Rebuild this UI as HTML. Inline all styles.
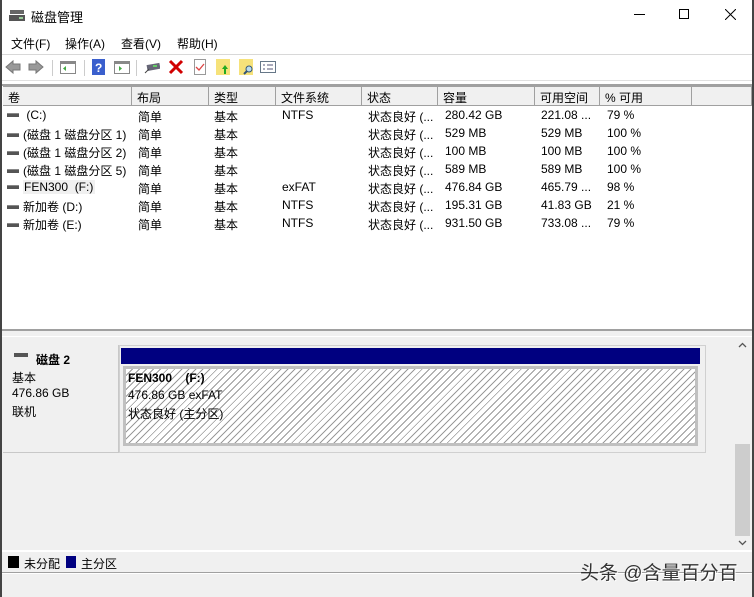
<!DOCTYPE html>
<html><head><meta charset="utf-8"><style>
*{margin:0;padding:0;box-sizing:border-box}
body{width:754px;height:597px;overflow:hidden;background:#fff;font-family:"Liberation Sans","Noto Sans CJK SC",sans-serif;font-size:12px;color:#000;position:relative}
.a{position:absolute;white-space:nowrap}
.hd{position:absolute;top:86px;height:20px;background:#f0f0f0;border-right:1px solid #a0a0a0;border-top:1px solid #a0a0a0;border-bottom:1px solid #a0a0a0;padding:2px 0 0 5px}
.r{position:absolute;left:0;width:700px;height:18px}
.r span{position:absolute;top:1px;white-space:nowrap}
.di{display:inline-block;width:12px;height:4px;background:#555;border-top:1px solid #888;vertical-align:middle;margin:0 4px 2px 0}
.tb{position:absolute;top:59px;width:16px;height:16px}
</style></head><body>
<div class="a" style="left:0;top:0;width:2px;height:597px;background:#444"></div>
<div class="a" style="left:752px;top:0;width:2px;height:597px;background:#444"></div>
<svg class="a" style="left:9px;top:8px" width="16" height="14"><rect x="1" y="2" width="14" height="4" fill="#666"/><rect x="0" y="7" width="16" height="6" fill="#555"/><rect x="10" y="9" width="4" height="2" fill="#9c9"/></svg>
<div class="a" style="left:31px;top:7px;font-size:13px">磁盘管理</div>
<div class="a" style="left:634px;top:14px;width:11px;height:1px;background:#000"></div>
<div class="a" style="left:679px;top:9px;width:10px;height:10px;border:1px solid #000"></div>
<svg class="a" style="left:725px;top:9px" width="11" height="11"><path d="M0 0L11 11M11 0L0 11" stroke="#000" stroke-width="1"/></svg>
<div class="a" style="left:11px;top:35px">文件(F)</div>
<div class="a" style="left:65px;top:35px">操作(A)</div>
<div class="a" style="left:121px;top:35px">查看(V)</div>
<div class="a" style="left:177px;top:35px">帮助(H)</div>
<div class="a" style="left:2px;top:54px;width:750px;height:1px;background:#d8d8d8"></div>
<svg class="tb" style="left:5px"><path d="M1 8L8 2V5H15V11H8V14Z" fill="#999" stroke="#777"/></svg>
<svg class="tb" style="left:28px"><path d="M15 8L8 2V5H1V11H8V14Z" fill="#999" stroke="#777"/></svg>
<div class="a" style="left:52px;top:60px;width:1px;height:16px;background:#ccc"></div>
<svg class="tb" style="left:60px"><rect x="0.5" y="2.5" width="15" height="12" fill="#fff" stroke="#888"/><rect x="1" y="3" width="14" height="2" fill="#888"/><path d="M6 7L3 9.5L6 12Z" fill="#4a4"/></svg>
<div class="a" style="left:84px;top:60px;width:1px;height:16px;background:#ccc"></div>
<svg class="tb" style="left:91px"><rect x="1" y="0" width="13" height="16" fill="#3a5fcd"/><text x="4" y="13" fill="#fff" font-size="12" font-family="Liberation Sans" font-weight="bold">?</text></svg>
<svg class="tb" style="left:114px"><rect x="0.5" y="2.5" width="15" height="12" fill="#fff" stroke="#888"/><rect x="1" y="3" width="14" height="2" fill="#888"/><path d="M5 7L8 9.5L5 12Z" fill="#4a4"/></svg>
<div class="a" style="left:136px;top:60px;width:1px;height:16px;background:#ccc"></div>
<svg class="tb" style="left:144px"><rect x="3" y="5" width="13" height="6" fill="#667" transform="rotate(-10 9 8)"/><rect x="9" y="6" width="4" height="2" fill="#6c6"/><path d="M1 14L5 10" stroke="#444"/></svg>
<svg class="tb" style="left:168px"><path d="M2 2L14 14M14 2L2 14" stroke="#d10000" stroke-width="3"/></svg>
<svg class="tb" style="left:192px"><rect x="2.5" y="0.5" width="11" height="15" fill="#fff" stroke="#999"/><path d="M4 8L7 11L12 5" stroke="#d44" fill="none" stroke-width="1.3"/></svg>
<svg class="tb" style="left:215px"><rect x="1" y="0" width="14" height="16" fill="#f6e27a"/><path d="M10 6L13 10H11V15H9V10H7Z" fill="#2a2"/></svg>
<svg class="tb" style="left:238px"><rect x="1" y="0" width="14" height="16" fill="#f6e27a"/><circle cx="11" cy="10" r="3" fill="#bde" stroke="#357"/><path d="M9 12L6 15" stroke="#357" stroke-width="2"/></svg>
<svg class="tb" style="left:260px"><rect x="0.5" y="2.5" width="15" height="11" fill="#fff" stroke="#678"/><path d="M3 6H5M7 6H13M3 10H5M7 10H13" stroke="#557"/></svg>
<div class="a" style="left:2px;top:80px;width:750px;height:1px;background:#e0e0e0"></div>
<div class="a" style="left:2px;top:84px;width:750px;height:2px;background:#a0a0a0"></div>
<div class="hd" style="left:3px;width:129px">卷</div>
<div class="hd" style="left:132px;width:77px">布局</div>
<div class="hd" style="left:209px;width:67px">类型</div>
<div class="hd" style="left:276px;width:86px">文件系统</div>
<div class="hd" style="left:362px;width:76px">状态</div>
<div class="hd" style="left:438px;width:97px">容量</div>
<div class="hd" style="left:535px;width:65px">可用空间</div>
<div class="hd" style="left:600px;width:92px">% 可用</div>
<div class="hd" style="left:692px;width:60px;padding:0"></div>
<div class="r" style="top:107px"><span style="left:7px"><i class="di"></i> (C:)</span><span style="left:138px">简单</span><span style="left:214px">基本</span><span style="left:282px">NTFS</span><span style="left:368px">状态良好 (...</span><span style="left:445px">280.42 GB</span><span style="left:541px">221.08 ...</span><span style="left:607px">79 %</span></div>
<div class="r" style="top:125px"><span style="left:7px"><i class="di"></i>(磁盘 1 磁盘分区 1)</span><span style="left:138px">简单</span><span style="left:214px">基本</span><span style="left:368px">状态良好 (...</span><span style="left:445px">529 MB</span><span style="left:541px">529 MB</span><span style="left:607px">100 %</span></div>
<div class="r" style="top:143px"><span style="left:7px"><i class="di"></i>(磁盘 1 磁盘分区 2)</span><span style="left:138px">简单</span><span style="left:214px">基本</span><span style="left:368px">状态良好 (...</span><span style="left:445px">100 MB</span><span style="left:541px">100 MB</span><span style="left:607px">100 %</span></div>
<div class="r" style="top:161px"><span style="left:7px"><i class="di"></i>(磁盘 1 磁盘分区 5)</span><span style="left:138px">简单</span><span style="left:214px">基本</span><span style="left:368px">状态良好 (...</span><span style="left:445px">589 MB</span><span style="left:541px">589 MB</span><span style="left:607px">100 %</span></div>
<div class="r" style="top:179px"><span style="left:7px"><i class="di"></i><b style="font-weight:normal;background:#f0f0f0;padding:0 2px 0 1px">FEN300&nbsp; (F:)</b></span><span style="left:138px">简单</span><span style="left:214px">基本</span><span style="left:282px">exFAT</span><span style="left:368px">状态良好 (...</span><span style="left:445px">476.84 GB</span><span style="left:541px">465.79 ...</span><span style="left:607px">98 %</span></div>
<div class="r" style="top:197px"><span style="left:7px"><i class="di"></i>新加卷 (D:)</span><span style="left:138px">简单</span><span style="left:214px">基本</span><span style="left:282px">NTFS</span><span style="left:368px">状态良好 (...</span><span style="left:445px">195.31 GB</span><span style="left:541px">41.83 GB</span><span style="left:607px">21 %</span></div>
<div class="r" style="top:215px"><span style="left:7px"><i class="di"></i>新加卷 (E:)</span><span style="left:138px">简单</span><span style="left:214px">基本</span><span style="left:282px">NTFS</span><span style="left:368px">状态良好 (...</span><span style="left:445px">931.50 GB</span><span style="left:541px">733.08 ...</span><span style="left:607px">79 %</span></div>
<div class="a" style="left:2px;top:329px;width:750px;height:8px;background:#f0f0f0;border-top:2px solid #a0a0a0;border-bottom:1px solid #fff"></div>
<div class="a" style="left:2px;top:337px;width:750px;height:213px;background:#f0f0f0"></div>
<div class="a" style="left:3px;top:345px;width:116px;height:108px;background:#f0f0f0;border-right:1px solid #c8c8c8;border-bottom:1px solid #c8c8c8"></div>
<div class="a" style="left:14px;top:353px;width:14px;height:4px;background:#555"></div>
<div class="a" style="left:36px;top:351px;font-weight:bold">磁盘 2</div>
<div class="a" style="left:12px;top:369px">基本</div>
<div class="a" style="left:12px;top:386px">476.86 GB</div>
<div class="a" style="left:12px;top:403px">联机</div>
<div class="a" style="left:119px;top:345px;width:587px;height:108px;border:1px solid #d0d0d0;background:#f0f0f0"></div>
<div class="a" style="left:121px;top:348px;width:579px;height:16px;background:#000080"></div>
<div class="a" style="left:123px;top:366px;width:575px;height:80px;border:3px solid #c0c0c0;background:repeating-linear-gradient(135deg,#fff 0,#fff 4px,#9a9a9a 4px,#9a9a9a 5px)"></div>
<div class="a" style="left:128px;top:371px;font-weight:bold">FEN300&nbsp;&nbsp;&nbsp; (F:)</div>
<div class="a" style="left:128px;top:388px">476.86 GB exFAT</div>
<div class="a" style="left:128px;top:405px">状态良好 (主分区)</div>
<div class="a" style="left:734px;top:338px;width:17px;height:212px;background:#f0f0f0"></div>
<svg class="a" style="left:738px;top:342px" width="9" height="6"><path d="M1 5L4.5 1.5L8 5" stroke="#555" fill="none" stroke-width="1.3"/></svg>
<div class="a" style="left:735px;top:444px;width:15px;height:92px;background:#cdcdcd"></div>
<svg class="a" style="left:738px;top:540px" width="9" height="6"><path d="M1 1L4.5 4.5L8 1" stroke="#555" fill="none" stroke-width="1.3"/></svg>
<div class="a" style="left:2px;top:551px;width:750px;height:22px;background:#f0f0f0;border-top:1px solid #fff;border-bottom:1px solid #a0a0a0"></div>
<div class="a" style="left:8px;top:556px;width:11px;height:12px;background:#000"></div>
<div class="a" style="left:24px;top:555px">未分配</div>
<div class="a" style="left:66px;top:556px;width:10px;height:12px;background:#000080"></div>
<div class="a" style="left:81px;top:555px">主分区</div>
<div class="a" style="left:2px;top:574px;width:750px;height:23px;background:#f0f0f0"></div>
<div class="a" style="left:580px;top:558px;font-size:19px;color:#333;text-shadow:1px 1px 0 #fff">头条 @含量百分百</div>
</body></html>
